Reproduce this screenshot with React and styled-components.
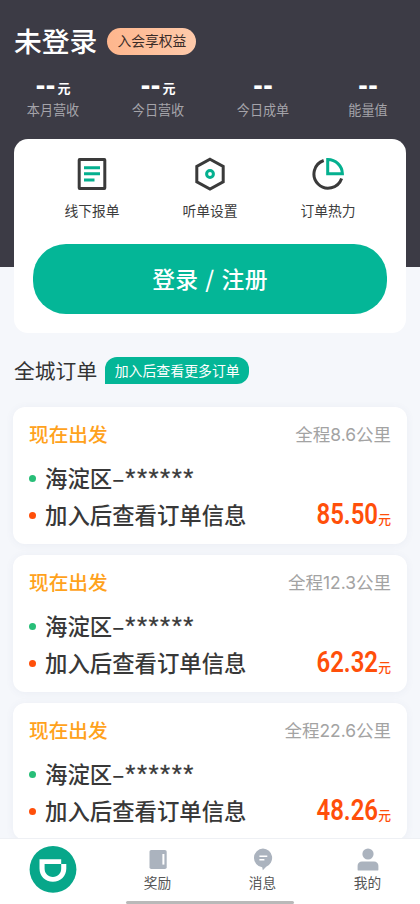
import React from 'react';
import styled, { createGlobalStyle } from 'styled-components';

const GlobalStyle = createGlobalStyle`
  * {
    box-sizing: border-box;
  }

  body {
    margin: 0;
    background: #f5f7fb;
    font-family: 'Noto Sans CJK SC', sans-serif;
  }
`;

const Screen = styled.div`
  width: 420px;
  height: 904px;
  display: flex;
  flex-direction: column;
  overflow: hidden;
  background: #f5f7fb;
`;

const Content = styled.main`
  flex: 1;
  min-height: 0;
  overflow: hidden;
`;

const Header = styled.header`
  height: 267px;
  padding-top: 21px;
  background: #3c3b45;
`;

const UserRow = styled.div`
  display: flex;
  align-items: center;
  gap: 10px;
  height: 40px;
  padding-left: 14px;
`;

const UserName = styled.h1`
  margin: -3px 0 0;
  font-size: 27.8px;
  line-height: 40px;
  font-weight: 500;
  color: #fff;
`;

const MemberBadge = styled.button`
  height: 27px;
  padding: 0 10px 2px;
  border: none;
  border-radius: 14px;
  background: linear-gradient(90deg, #feb68d, #fecaab);
  color: #3a2c28;
  font-family: inherit;
  font-size: 13.8px;
  line-height: 25px;
`;

const Stats = styled.div`
  display: grid;
  grid-template-columns: repeat(4, 1fr);
  margin-top: 16px;
`;

const Stat = styled.div`
  display: flex;
  flex-direction: column;
  align-items: center;
`;

const StatValue = styled.div`
  display: flex;
  align-items: center;
  gap: 2px;
  height: 22px;
  padding-left: 1px;
  color: #fff;
  font-size: 13px;
  font-weight: 700;
  line-height: 20px;
`;

const Dashes = styled.span`
  margin-top: -4px;
  font-family: 'DejaVu Sans', sans-serif;
  font-size: 24px;
  line-height: 18px;
`;

const StatLabel = styled.div`
  margin-top: 1px;
  padding-left: 1px;
  font-size: 13.1px;
  line-height: 20px;
  color: #a5a4aa;
`;

const Panel = styled.section`
  height: 194px;
  margin: -128px 14px 0;
  padding: 17px 19px 0;
  border-radius: 14px;
  background: #fff;
`;

const Tools = styled.div`
  display: grid;
  grid-template-columns: repeat(3, 118px);
  height: 88px;
`;

const Tool = styled.div`
  display: flex;
  flex-direction: column;
  align-items: center;
  font-size: 13.8px;
  line-height: 20px;
  color: #3c3c3c;

  svg {
    margin-bottom: 8px;
  }
`;

const LoginButton = styled.button`
  display: block;
  width: 354px;
  height: 70px;
  padding: 0 0 1px;
  border: none;
  border-radius: 33px;
  background: #04b697;
  color: #fff;
  font-family: inherit;
  font-size: 22.8px;
  font-weight: 500;
  letter-spacing: 0.4px;
  word-spacing: 1.3px;
`;

const SectionHead = styled.div`
  display: flex;
  align-items: center;
  gap: 8px;
  height: 30px;
  margin: 22px 0 0 14px;
`;

const SectionTitle = styled.h2`
  margin: 0;
  font-size: 20.8px;
  font-weight: 400;
  line-height: 30px;
  color: #333;
`;

const SectionTag = styled.span`
  height: 27px;
  padding: 0 9.5px;
  border-radius: 12px 12px 12px 0;
  background: #04b697;
  color: #fff;
  font-size: 13.9px;
  line-height: 27px;
`;

const Orders = styled.div`
  display: flex;
  flex-direction: column;
  gap: 11px;
  padding: 22px 13px 0;
`;

const OrderCard = styled.article`
  height: 137px;
  padding: 12px 16px 0;
  border-radius: 12px;
  background: #fff;
  box-shadow: 0 1px 8px rgba(60, 80, 130, 0.06);
`;

const CardTop = styled.div`
  display: flex;
  justify-content: space-between;
  height: 30px;
  margin-bottom: 10px;
  line-height: 30px;
`;

const Departure = styled.span`
  font-size: 19.7px;
  font-weight: 500;
  color: #ffa21c;
`;

const Distance = styled.span`
  font-size: 17.5px;
  color: #a3a3a3;
`;

const Km = styled.span`
  font-family: Inter, 'Liberation Sans', sans-serif;
  font-size: 17.4px;
`;

const Stop = styled.div`
  display: flex;
  align-items: center;
  height: 37px;
  font-size: 22.4px;
  font-weight: 500;
  line-height: 37px;
  color: #383838;
`;

const Dot = styled.i`
  width: 7px;
  height: 7px;
  margin: 2px 9px 0 0;
  border-radius: 50%;
  background: ${({ $color }) => $color};
`;

const Masked = styled.span`
  margin: 2px 0 0 1px;
  font-family: 'Liberation Sans', sans-serif;
  font-size: 26px;
  font-weight: 400;
  letter-spacing: 1.5px;
  -webkit-text-stroke: 0.3px #383838;
`;

const Price = styled.span`
  display: flex;
  align-items: baseline;
  margin-left: auto;
  padding-top: 2px;
  color: #ff4f0a;
  font-size: 12.8px;
`;

/* squeezed to get the narrow numerals of the price */
const Amount = styled.span`
  font-family: Roboto, sans-serif;
  font-size: 30px;
  font-weight: 600;
  transform: scaleX(0.8);
  transform-origin: right;
`;

const NavBar = styled.nav`
  display: grid;
  grid-template-columns: repeat(4, 1fr);
  align-content: start;
  position: relative;
  height: 66px;
  border-top: 1px solid #eef0f4;
  background: #fff;
`;

const NavItem = styled.div`
  display: flex;
  flex-direction: column;
  align-items: center;
  padding-top: ${({ $home }) => ($home ? 7 : 9)}px;
  font-size: 13.7px;
  line-height: 20px;
  color: #555;
`;

const HomeIndicator = styled.div`
  position: absolute;
  left: 126px;
  bottom: 0;
  width: 168px;
  height: 3px;
  border-radius: 2px;
  background: #b9b9b9;
`;

const ReportIcon = () => (
  <svg width="34" height="36" viewBox="0 0 34 36" fill="none">
    <rect x="4.2" y="3.5" width="25.6" height="29" rx="0.4" stroke="#3a3a3a" strokeWidth="3" />
    <path d="M9 11.7h16M9 17.8h16M9 24h10.5" stroke="#04b08f" strokeWidth="3" />
  </svg>
);

const SettingsIcon = () => (
  <svg width="34" height="36" viewBox="0 0 34 36" fill="none">
    <path d="M17 3.2l13.2 7.2v15.4L17 33 3.8 25.8V10.4z" stroke="#3a3a3a" strokeWidth="3" />
    <circle cx="17" cy="18" r="3.4" stroke="#04b08f" strokeWidth="3" />
  </svg>
);

const HeatIcon = () => (
  <svg width="34" height="36" viewBox="0 0 34 36" fill="none">
    <path d="M12.7 4.5A14.2 14.2 0 1 0 30.6 22.6" stroke="#3a3a3a" strokeWidth="3" />
    <path d="M16.7 3.6A14.6 14.6 0 0 1 31.4 17.8H16.7z" stroke="#04b08f" strokeWidth="3" />
  </svg>
);

const LogoIcon = () => (
  <svg width="48" height="48" viewBox="0 0 48 48">
    <circle cx="24" cy="23.4" r="23.4" fill="#07a78a" />
    <path d="M10.5 13.2h21.7V18h5.1v4.5c0 7.5-5.6 13.2-13.4 13.2s-13.4-5.7-13.4-13.2z" fill="#fff" />
    <path d="M15.6 18h16.6v4.5c0 4.9-3.4 8.4-8.3 8.4s-8.3-3.5-8.3-8.4z" fill="#07a78a" />
  </svg>
);

const RewardIcon = () => (
  <svg width="24" height="24" viewBox="0 0 24 24">
    <rect x="3.5" y="2" width="17.2" height="19" rx="1.8" fill="#abb3be" />
    <rect x="16.4" y="6" width="2" height="10.6" fill="#fff" />
  </svg>
);

const MessageIcon = () => (
  <svg width="24" height="24" viewBox="0 0 24 24">
    <path d="M12 0.4a9.5 9.5 0 0 0-.8 18.9l.6 2.9 3.4-3.5A9.5 9.5 0 0 0 12 .4z" fill="#abb3be" />
    <path d="M8.4 8.3h7.9M8.4 11.8h5" stroke="#fff" strokeWidth="1.4" />
  </svg>
);

const ProfileIcon = () => (
  <svg width="24" height="24" viewBox="0 0 24 24" fill="#abb3be">
    <circle cx="12" cy="6" r="5.6" />
    <path d="M1.6 21.4v-3.6c0-2.6 1.9-4.4 4.4-4.4h12c2.5 0 4.4 1.8 4.4 4.4v3.6c0 .8-.4 1.2-1.2 1.2H2.8c-.8 0-1.2-.4-1.2-1.2z" />
  </svg>
);

const stats = [
  { label: '本月营收', unit: '元' },
  { label: '今日营收', unit: '元' },
  { label: '今日成单' },
  { label: '能量值' }
];

const tools = [
  { label: '线下报单', Icon: ReportIcon },
  { label: '听单设置', Icon: SettingsIcon },
  { label: '订单热力', Icon: HeatIcon }
];

const orders = [
  { km: '8.6', price: '85.50' },
  { km: '12.3', price: '62.32' },
  { km: '22.6', price: '48.26' }
];

const navItems = [
  { label: '奖励', Icon: RewardIcon },
  { label: '消息', Icon: MessageIcon },
  { label: '我的', Icon: ProfileIcon }
];

const App = () => (
  <Screen>
    <GlobalStyle />
    <Content>
      <Header>
        <UserRow>
          <UserName>未登录</UserName>
          <MemberBadge>入会享权益</MemberBadge>
        </UserRow>
        <Stats>
          {stats.map(({ label, unit }) => (
            <Stat key={label}>
              <StatValue>
                <Dashes>--</Dashes>
                {unit}
              </StatValue>
              <StatLabel>{label}</StatLabel>
            </Stat>
          ))}
        </Stats>
      </Header>

      <Panel>
        <Tools>
          {tools.map(({ label, Icon }) => (
            <Tool key={label}>
              <Icon />
              {label}
            </Tool>
          ))}
        </Tools>
        <LoginButton>登录 / 注册</LoginButton>
      </Panel>

      <SectionHead>
        <SectionTitle>全城订单</SectionTitle>
        <SectionTag>加入后查看更多订单</SectionTag>
      </SectionHead>

      <Orders>
        {orders.map(({ km, price }) => (
          <OrderCard key={price}>
            <CardTop>
              <Departure>现在出发</Departure>
              <Distance>
                全程<Km>{km}</Km>公里
              </Distance>
            </CardTop>
            <Stop>
              <Dot $color="#28be78" />
              海淀区–<Masked>******</Masked>
            </Stop>
            <Stop>
              <Dot $color="#ff4f0a" />
              加入后查看订单信息
              <Price>
                <Amount>{price}</Amount>元
              </Price>
            </Stop>
          </OrderCard>
        ))}
      </Orders>
    </Content>

    <NavBar>
      <NavItem $home>
        <LogoIcon />
      </NavItem>
      {navItems.map(({ label, Icon }) => (
        <NavItem key={label}>
          <Icon />
          {label}
        </NavItem>
      ))}
      <HomeIndicator />
    </NavBar>
  </Screen>
);

export default App;
